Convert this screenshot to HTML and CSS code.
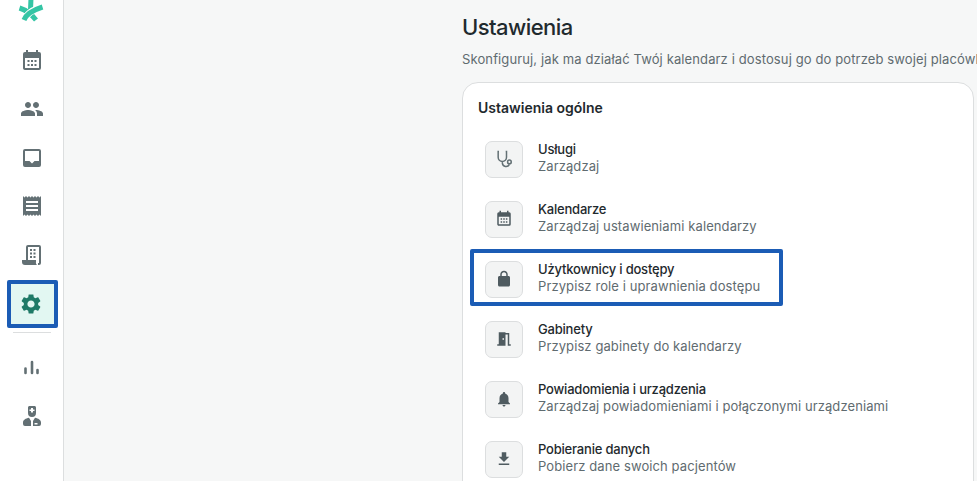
FILE: index.html
```html
<!DOCTYPE html>
<html lang="pl">
<head>
<meta charset="utf-8">
<title>Ustawienia</title>
<link rel="stylesheet" href="styles.css">
</head>
<body>
<div class="app">
  <aside class="sidebar">
    <svg class="logo" viewBox="0 0 28 22"><path d="M14 -2L13.500 10M2.500 8Q12 11 19 20" fill="none" stroke="#35c5a5" stroke-width="5"/><path d="M7 21Q10 11 25.500 7" fill="none" stroke="#fff" stroke-width="6.500"/><path d="M7 20Q10 12 25.500 7" fill="none" stroke="#35c5a5" stroke-width="5"/></svg>
    <nav class="nav">
      <a class="nav-item"><svg class="ico" viewBox="0 0 24 24"><path d="M19 3h-1V1h-2v2H8V1H6v2H5a2 2 0 0 0-2 2v14c0 1.100.9 2 2 2h14a2 2 0 0 0 2-2V5a2 2 0 0 0-2-2zm0 16H5V9h14v10z"/><path d="M7.500 11h2v2h-2zM11 11h2v2h-2zM14.500 11h2v2h-2zM7.500 15h2v2h-2zM11 15h2v2h-2zM14.500 15h2v2h-2z"/></svg></a>
      <a class="nav-item"><svg class="ico" viewBox="0 0 24 24"><path d="M16 11c1.660 0 2.990-1.340 2.990-3S17.660 5 16 5c-1.660 0-3 1.340-3 3s1.340 3 3 3zm-8 0c1.660 0 2.990-1.340 2.990-3S9.660 5 8 5C6.340 5 5 6.340 5 8s1.340 3 3 3zm0 2c-2.330 0-7 1.170-7 3.500V19h14v-2.500c0-2.330-4.670-3.500-7-3.500zm8 0c-.29 0-.62.02-.97.05 1.160.84 1.970 1.970 1.970 3.450V19h6v-2.500c0-2.330-4.670-3.500-7-3.500z"/></svg></a>
      <a class="nav-item"><svg class="ico" viewBox="0 0 24 24"><path fill-rule="evenodd" d="M5 3h14a2 2 0 0 1 2 2v14a2 2 0 0 1-2 2H5a2 2 0 0 1-2-2V5a2 2 0 0 1 2-2zm0 2v10h4.500l2.500 2.500 2.500-2.500H19V5H5z"/></svg></a>
      <a class="nav-item"><svg class="ico" viewBox="0 0 24 24"><path d="M18 17H6v-2h12v2zm0-4H6v-2h12v2zm0-4H6V7h12v2zM3 22l1.500-1.500L6 22l1.500-1.500L9 22l1.500-1.500L12 22l1.500-1.500L15 22l1.500-1.500L18 22l1.500-1.500L21 22V2l-1.500 1.500L18 2l-1.500 1.500L15 2l-1.500 1.500L12 2l-1.500 1.500L9 2 7.500 3.500 6 2 4.500 3.500 3 2v20z"/></svg></a>
      <a class="nav-item"><svg class="ico" viewBox="0 0 24 24"><path fill-rule="evenodd" d="M8 2h11a2 2 0 0 1 2 2v16a2 2 0 0 1-2 2h-1v-2h1V4H8v13H6V4a2 2 0 0 1 2-2z"/><path d="M2 17h14v2a3 3 0 0 0 1 3H5a3 3 0 0 1-3-3v-2zM10 6h2v2h-2zM13.500 6h2v2h-2zM10 9.500h2v2h-2zM13.500 9.500h2v2h-2zM10 13h2v2h-2zM13.500 13h2v2h-2z"/></svg></a>
      <a class="nav-item active">
        <svg class="ico" viewBox="0 0 24 24"><path d="M19.140 12.940c.04-.3.06-.61.06-.94 0-.32-.02-.64-.07-.94l2.030-1.580c.18-.14.23-.41.12-.61l-1.920-3.320c-.12-.22-.37-.29-.59-.22l-2.390.96c-.5-.38-1.030-.7-1.620-.94l-.36-2.540c-.04-.24-.24-.41-.48-.41h-3.840c-.24 0-.43.17-.47.41l-.36 2.540c-.59.24-1.130.57-1.620.94l-2.390-.96c-.22-.08-.47 0-.59.22L2.740 8.870c-.12.21-.08.47.12.61l2.030 1.580c-.05.3-.09.63-.09.94s.02.64.07.94l-2.030 1.580c-.18.14-.23.41-.12.61l1.920 3.320c.12.22.37.29.59.22l2.390-.96c.5.38 1.030.7 1.620.94l.36 2.540c.05.24.24.41.48.41h3.840c.24 0 .44-.17.47-.41l.36-2.540c.59-.24 1.130-.56 1.620-.94l2.390.96c.22.08.47 0 .59-.22l1.920-3.320c.12-.22.07-.47-.12-.61l-2.010-1.580zM12 15.600c-1.980 0-3.600-1.620-3.600-3.600s1.620-3.600 3.600-3.600 3.600 1.620 3.600 3.600-1.620 3.600-3.600 3.600z"/></svg>
      </a>
      <div class="nav-divider"></div>
      <a class="nav-item"><svg class="ico" viewBox="0 0 24 24"><path d="M5.500 13.500V18M12 7V18M17.500 15V18" class="bars"/></svg></a>
      <a class="nav-item"><svg class="ico" viewBox="0 0 24 24"><path fill-rule="evenodd" d="M8 3.500c0-.8.7-1.500 1.500-1.500h5c.8 0 1.500.7 1.500 1.500V9a4 4 0 0 1-8 0V3.500zM11 4v1.500H9.500v1.500H11v1.500h2V7h1.500V5.500H13V4h-2z"/><path d="M3 18.500c0-2.600 2.700-4.200 6-4.800l2 3.300V22H5a2 2 0 0 1-2-2v-1.500zM21 18.500c0-2.600-2.700-4.200-6-4.800l-2 3.300V22h6a2 2 0 0 0 2-2v-1.500z"/><path d="M14.500 19h3v1.500h-3z" class="cut"/></svg></a>
    </nav>
  </aside>
  <main class="main">
    <h1 class="title">Ustawienia</h1>
    <p class="subtitle">Skonfiguruj, jak ma działać Twój kalendarz i dostosuj go do potrzeb swojej placówki</p>
    <section class="card">
      <h2 class="card-title">Ustawienia ogólne</h2>
      <div class="rows">
        <div class="row">
          <span class="tile"><svg class="ticon steth" viewBox="0 0 24 24"><path d="M6 3H5v7a5 5 0 0 0 10 0V3h-1M10 15v2a4.500 4.500 0 0 0 8.500 1.500" class="line"/><circle cx="18.500" cy="15.500" r="2.200" class="line"/></svg></span>
          <div class="text"><div class="name">Usługi</div><div class="desc">Zarządzaj</div></div>
        </div>
        <div class="row">
          <span class="tile"><svg class="ticon" viewBox="0 0 24 24"><path d="M19 3h-1V1h-2v2H8V1H6v2H5a2 2 0 0 0-2 2v14c0 1.100.9 2 2 2h14a2 2 0 0 0 2-2V5a2 2 0 0 0-2-2zm0 16H5V9h14v10z"/><path d="M7.500 11h2v2h-2zM11 11h2v2h-2zM14.500 11h2v2h-2zM7.500 15h2v2h-2zM11 15h2v2h-2zM14.500 15h2v2h-2z"/></svg></span>
          <div class="text"><div class="name">Kalendarze</div><div class="desc">Zarządzaj ustawieniami kalendarzy</div></div>
        </div>
        <div class="row marked">
          <span class="tile"><svg class="ticon" viewBox="0 0 24 24"><path d="M18 8h-1V6c0-2.760-2.240-5-5-5S7 3.240 7 6v2H6c-1.100 0-2 .9-2 2v10c0 1.100.9 2 2 2h12c1.100 0 2-.9 2-2V10c0-1.100-.9-2-2-2zM12 3c1.660 0 3 1.340 3 3v2H9V6c0-1.660 1.340-3 3-3z"/></svg></span>
          <div class="text"><div class="name">Użytkownicy i dostępy</div><div class="desc">Przypisz role i uprawnienia dostępu</div></div>
        </div>
        <div class="row">
          <span class="tile"><svg class="ticon" viewBox="0 0 24 24"><path d="M14 6v15H3v-2h2V3h9v1h5v15h2v2h-4V6h-3zm-4 5v2h2v-2h-2z"/></svg></span>
          <div class="text"><div class="name">Gabinety</div><div class="desc">Przypisz gabinety do kalendarzy</div></div>
        </div>
        <div class="row">
          <span class="tile"><svg class="ticon" viewBox="0 0 24 24"><path d="M12 22c1.100 0 2-.9 2-2h-4c0 1.100.89 2 2 2zm6-6v-5c0-3.070-1.640-5.640-4.500-6.320V4c0-.83-.67-1.500-1.500-1.500s-1.500.67-1.500 1.500v.68C7.630 5.360 6 7.920 6 11v5l-2 2v1h16v-1l-2-2z"/></svg></span>
          <div class="text"><div class="name">Powiadomienia i urządzenia</div><div class="desc">Zarządzaj powiadomieniami i połączonymi urządzeniami</div></div>
        </div>
        <div class="row">
          <span class="tile"><svg class="ticon" viewBox="0 0 24 24"><path d="M19 9h-4V3H9v6H5l7 7 7-7zM5 18v2h14v-2H5z"/></svg></span>
          <div class="text"><div class="name">Pobieranie danych</div><div class="desc">Pobierz dane swoich pacjentów</div></div>
        </div>
      </div>
    </section>
  </main>
</div>
</body>
</html>
```
FILE: styles.css
```css
*, *::before, *::after { box-sizing: border-box; }
html, body { margin: 0; height: 100%; overflow: hidden; }
body { font-family: Inter, "Liberation Sans", sans-serif; background: #f6f7f7; color: #1f2a2e; }
.app { display: flex; height: 481px; }
.sidebar { width: 64px; flex: none; background: #fff; border-right: 1px solid #dcdedf; display: flex; flex-direction: column; align-items: center; }
.logo { width: 28px; height: 22px; display: block; flex: none; margin-right: 1px; }
.nav { display: flex; flex-direction: column; align-items: center; width: 100%; padding-top: 14.500px; }
.nav-item { width: 44px; height: 48.500px; display: flex; align-items: center; justify-content: center; flex: none; }
.ico { width: 24px; height: 24px; fill: #637074; display: block; }
.bars { fill: none; stroke: #637074; stroke-width: 2.600; stroke-linecap: round; }
.cut { fill: #fff; }
.nav-item.active { width: 51px; height: 48px; align-self: flex-start; margin: 1px 0 0 7px; background: #e2f7f2; border: 4px solid #1b5cb5; border-radius: 2px; }
.nav-item.active .ico { fill: #1e7a67; margin-right: 3px; }
.nav-divider { width: 38px; height: 1px; background: #dcdedf; margin: 4px 0 10px; }
.main { flex: 1; min-width: 0; padding: 13px 0 0 398px; }
.title { margin: 0; font-size: 22px; line-height: 28px; font-weight: 500; letter-spacing: -.55px; color: #1f2a2e; }
.subtitle { margin: 8px 0 0; font-size: 13px; line-height: 20px; letter-spacing: .12px; color: #5f6b70; white-space: nowrap; overflow: hidden; }
.card { width: 512px; margin-top: 13px; background: #fff; border: 1px solid #dcdedf; border-radius: 16px 16px 0 0; padding: 15px 15px 0; height: 400px; }
.card-title { margin: 0; font-size: 14px; line-height: 20px; font-weight: 600; color: #1f2a2e; }
.rows { display: flex; flex-direction: column; margin-top: 11px; padding-left: 7px; }
.row { height: 60px; display: flex; align-items: center; gap: 15px; flex: none; position: relative; }
.row.marked::after { content: ""; position: absolute; left: -15px; top: 0; width: 313px; height: 57px; border: 4px solid #1b5cb5; border-radius: 2px; }
.tile { width: 38px; height: 37px; display: flex; align-items: center; justify-content: center; background: #f3f4f4; border: 1px solid #dcdedf; border-radius: 7px; flex: none; }
.ticon { width: 18px; height: 18px; fill: #4f5b60; display: block; }
.steth { width: 20px; height: 20px; }
.line { fill: none; stroke: #637074; stroke-width: 1.800; }
.text { display: flex; flex-direction: column; margin-top: -3px; }
.name { font-size: 13px; line-height: 17px; font-weight: 500; letter-spacing: -.2px; color: #1f2a2e; }
.desc { font-size: 13px; line-height: 17px; letter-spacing: .1px; color: #5f6b70; white-space: nowrap; }
```
